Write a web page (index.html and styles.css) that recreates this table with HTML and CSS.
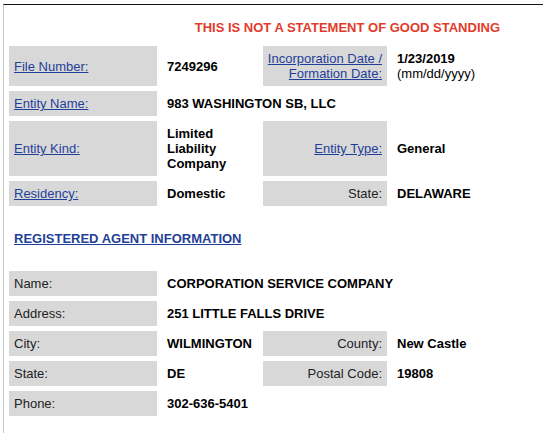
FILE: index.html
```html
<!DOCTYPE html>
<html>
<head>
<meta charset="utf-8">
<link rel="stylesheet" href="styles.css">
</head>
<body>
<div class="frame">
  <div class="notice">THIS IS NOT A STATEMENT OF GOOD STANDING</div>

  <div class="grid">
    <div class="lbl"><a href="#">File Number:</a></div>
    <div class="val">7249296</div>
    <div class="lbl right nowrap"><a href="#">Incorporation Date /<br>Formation Date:</a></div>
    <div class="val">1/23/2019<br><span class="plain">(mm/dd/yyyy)</span></div>

    <div class="lbl"><a href="#">Entity Name:</a></div>
    <div class="val span3">983 WASHINGTON SB, LLC</div>

    <div class="lbl"><a href="#">Entity Kind:</a></div>
    <div class="val">Limited Liability Company</div>
    <div class="lbl right"><a href="#">Entity Type:</a></div>
    <div class="val">General</div>

    <div class="lbl"><a href="#">Residency:</a></div>
    <div class="val">Domestic</div>
    <div class="lbl right">State:</div>
    <div class="val">DELAWARE</div>
  </div>

  <div class="section"><a href="#">REGISTERED AGENT INFORMATION</a></div>

  <div class="grid">
    <div class="lbl">Name:</div>
    <div class="val span3">CORPORATION SERVICE COMPANY</div>

    <div class="lbl">Address:</div>
    <div class="val span3">251 LITTLE FALLS DRIVE</div>

    <div class="lbl">City:</div>
    <div class="val">WILMINGTON</div>
    <div class="lbl right">County:</div>
    <div class="val">New Castle</div>

    <div class="lbl">State:</div>
    <div class="val">DE</div>
    <div class="lbl right">Postal Code:</div>
    <div class="val">19808</div>

    <div class="lbl">Phone:</div>
    <div class="val span3">302-636-5401</div>
  </div>
</div>
</body>
</html>
```

FILE: styles.css
```css
html, body {
  margin: 0;
  padding: 0;
  background: #fff;
}

body {
  font-family: "Liberation Sans", Arial, sans-serif;
  font-size: 13px;
  line-height: 15px;
  color: #000;
}

.frame {
  box-sizing: border-box;
  margin: 4px 0 0 3px;
  border-top: 1px solid #111;
  border-left: 1px solid #c8c8c8;
  padding: 15px 0 10px 5px;
  min-height: calc(100vh - 4px);
}

.notice {
  color: #e23b2b;
  font-weight: bold;
  text-align: right;
  padding-right: 43px;
  margin-bottom: 11px;
}

.grid {
  display: grid;
  grid-template-columns: 148px 96px 124px 1fr;
  gap: 5px;
  margin-right: 5px;
}

.lbl {
  background: #d8d8d8;
  padding: 5px;
  display: flex;
  align-items: center;
  color: #222;
}

.lbl.right {
  justify-content: flex-end;
  text-align: right;
}

.nowrap {
  white-space: nowrap;
}

.lbl a, .section a {
  color: #1f3f98;
  text-decoration: underline;
}

.val {
  padding: 5px;
  display: flex;
  flex-direction: column;
  justify-content: center;
  font-weight: bold;
}

.val .plain {
  font-weight: normal;
}

.span3 {
  grid-column: span 3;
}

.section {
  font-weight: bold;
  padding-left: 5px;
  margin: 25px 0 25px;
}
```
